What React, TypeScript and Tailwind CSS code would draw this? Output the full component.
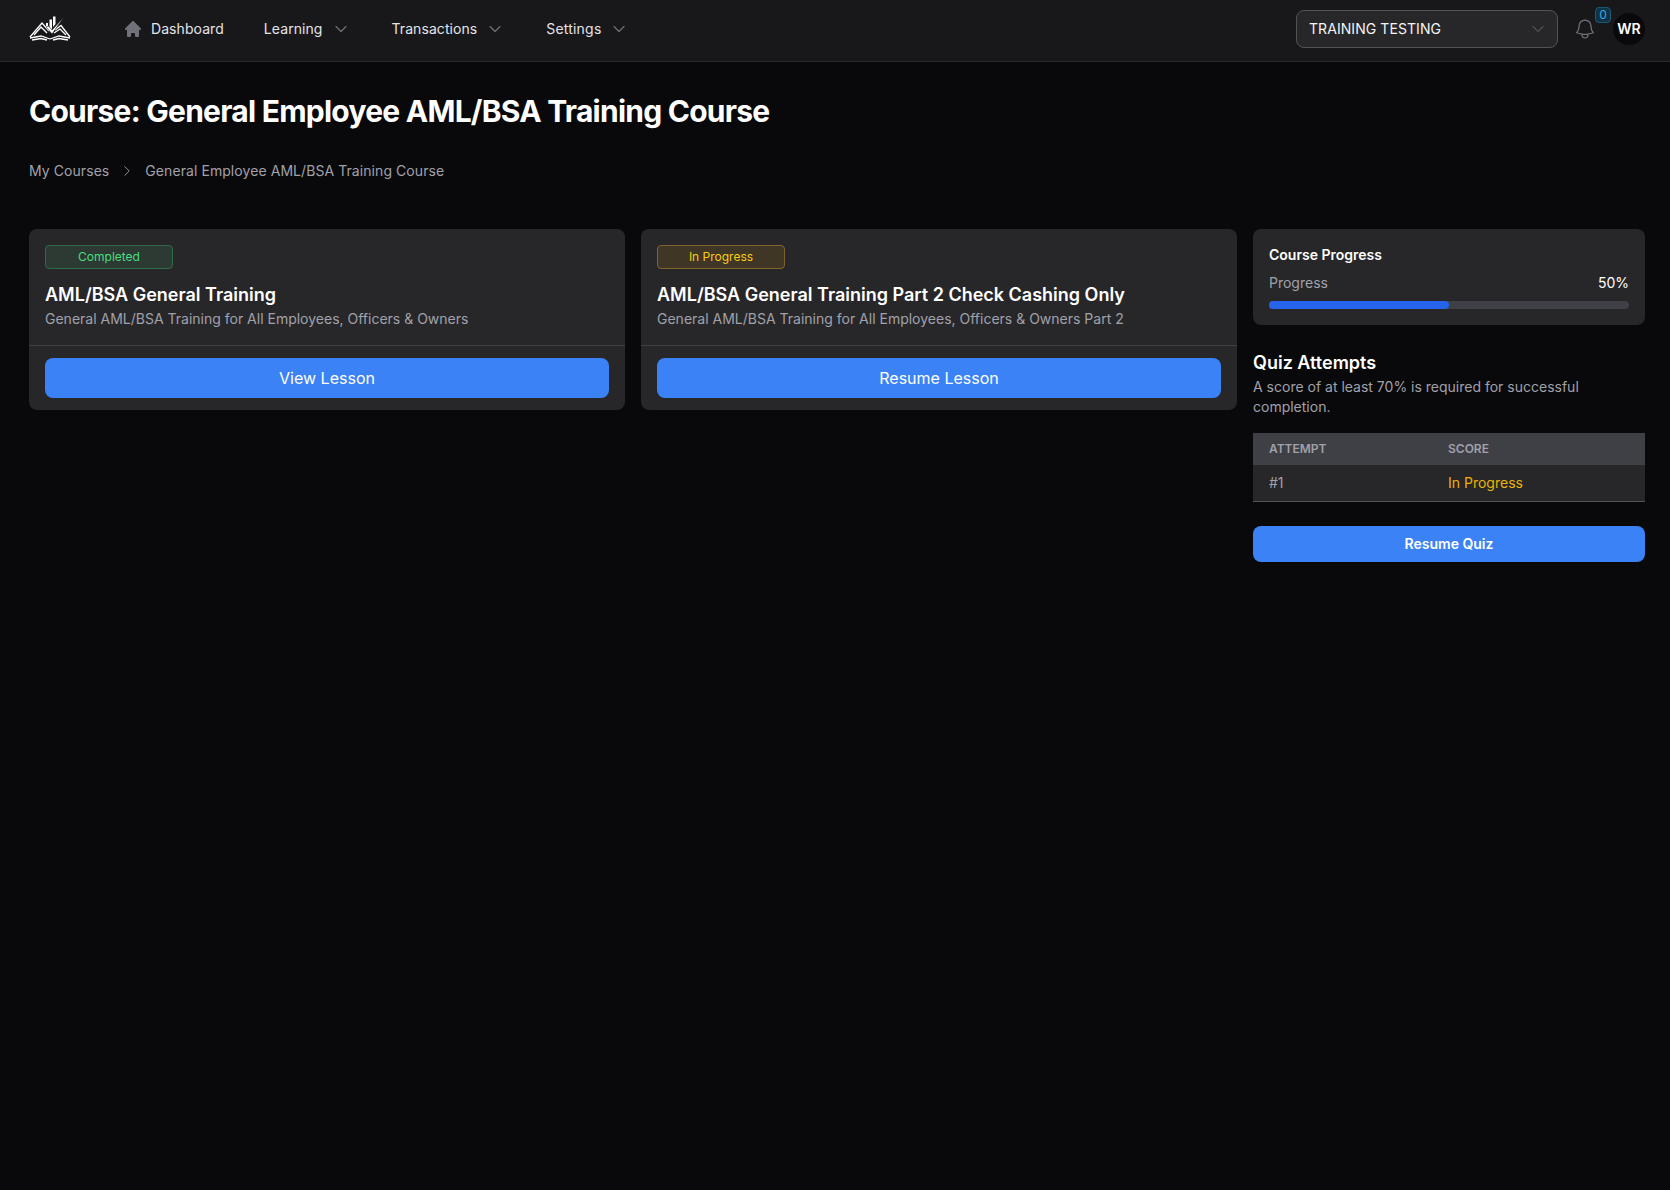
import { HiHome } from "react-icons/hi";
import { HiOutlineBell, HiOutlineChevronDown, HiOutlineChevronRight } from "react-icons/hi2";

function Logo() {
  return (
    <svg width="42" height="26" viewBox="0 0 42 26" fill="none" className="block">
      <g stroke="#fff" strokeWidth="1.3" strokeLinejoin="miter">
        <path d="M1 21 L13 7 L20 15" />
        <path d="M5 19 L12 11 L18 17" />
        <path d="M1 22 L12 20 L21 23" />
        <path d="M3 24 L12 22.5 L18 24" />
        <path d="M41 21 L32 9.5 L26 14" />
        <path d="M37 19 L31 13 L25 17" />
        <path d="M41 22 L30 20 L21 23" />
        <path d="M39 24 L30 22.5 L24 24" />
      </g>
      <path d="M17 7 H19 V13 L17 11 Z M20.5 3.5 H23 V12.5 L22 14.5 L20.5 13 Z M24 0.5 H26.5 V8 L24 11 Z" fill="#fff" />
      <path d="M17 11 L19.5 10 L23 14 L35 1 L23 18 Z" fill="#fff" stroke="#18181b" strokeWidth="0.6" />
    </svg>
  );
}

function NavItem({ label, wide }: { label: string; wide?: boolean }) {
  return (
    <div className="flex items-center">
      <span className={wide ? "text-[14px] leading-5 tracking-[0.2px] text-[#e4e4e7]" : "text-[14px] leading-5 tracking-[0.07px] text-[#e4e4e7]"}>{label}</span>
      <HiOutlineChevronDown className="mr-[3px] ml-2.5 size-4 text-[#71717a]" strokeWidth={1.75} />
    </div>
  );
}

function LessonCard({
  status,
  statusClass,
  title,
  desc,
  action,
}: {
  status: string;
  statusClass: string;
  title: string;
  desc: string;
  action: string;
}) {
  return (
    <div className="flex-1 rounded-lg bg-[#27272a]">
      <div className="border-b border-[#3f3f46] p-4">
        <div className={`flex h-6 w-32 items-center justify-center rounded border text-xs ${statusClass}`}>{status}</div>
        <h2 className="mt-3 text-[18px] leading-7 font-semibold text-white">{title}</h2>
        <p className="text-sm leading-5 text-[#a1a1aa]">{desc}</p>
      </div>
      <div className="px-4 py-3">
        <button className="h-10 w-full rounded-lg bg-[#3b82f6] text-base text-white">{action}</button>
      </div>
    </div>
  );
}

export default function App() {
  return (
    <div className="min-h-[1190px] bg-[#09090b] font-['Inter',sans-serif]">
      <header className="flex h-[62px] items-center border-b border-[#2a2a2e] bg-[#18181b] pr-[25px] pb-[3px] pl-[29px]">
        <Logo />
        <nav className="ml-[52px] flex items-center gap-10">
          <div className="flex items-center">
            <HiHome className="size-[20px] text-[#71717a]" />
            <span className="ml-2 text-[14px] leading-5 tracking-[0.07px] text-[#e4e4e7]">Dashboard</span>
          </div>
          <NavItem label="Learning" />
          <NavItem label="Transactions" />
          <NavItem label="Settings" wide />
        </nav>
        <div className="ml-auto flex items-center">
          <div className="flex h-[38px] w-[262px] items-center justify-between rounded-lg border border-[#52525b] bg-[#27272a] pr-[11px] pl-3">
            <span className="text-sm tracking-[0.07px] text-[#f4f4f5]">TRAINING TESTING</span>
            <HiOutlineChevronDown className="size-4 text-[#71717a]" />
          </div>
          <div className="relative ml-[15px]">
            <HiOutlineBell className="size-6 text-[#71717a]" strokeWidth={1.25} />
            <span className="absolute -top-[10px] left-[22px] flex size-4 items-center justify-center rounded border border-[#1a5a78] bg-[#0f3347] text-xs text-[#38a8e8]">
              0
            </span>
          </div>
          <div className="ml-4 flex size-8 items-center justify-center rounded-full bg-[#09090b] text-sm font-semibold text-white">WR</div>
        </div>
      </header>

      <main className="pr-[25px] pl-[29px]">
        <h1 className="pt-[31px] text-[30px] leading-9 font-bold tracking-tight text-white">Course: General Employee AML/BSA Training Course</h1>
        <div className="mt-8 flex items-center text-sm leading-5 tracking-[0.07px] text-[#a1a1aa]">
          <span>My Courses</span>
          <HiOutlineChevronRight className="mx-[11px] size-3.5 text-[#a1a1aa]" />
          <span>General Employee AML/BSA Training Course</span>
        </div>

        <div className="mt-12 flex items-start gap-4">
          <div className="flex flex-1 items-start gap-4">
            <LessonCard
              status="Completed"
              statusClass="border-[#2f6b46] bg-[#2c3a33] text-[#4ade80]"
              title="AML/BSA General Training"
              desc="General AML/BSA Training for All Employees, Officers & Owners"
              action="View Lesson"
            />
            <LessonCard
              status="In Progress"
              statusClass="border-[#80622a] bg-[#3f3626] text-[#facc15]"
              title="AML/BSA General Training Part 2 Check Cashing Only"
              desc="General AML/BSA Training for All Employees, Officers & Owners Part 2"
              action="Resume Lesson"
            />
          </div>

          <aside className="w-[392px] shrink-0">
            <div className="rounded-lg bg-[#27272a] p-4">
              <h3 className="text-sm leading-5 font-semibold text-white">Course Progress</h3>
              <div className="mt-2 flex justify-between text-sm leading-5">
                <span className="text-[#a1a1aa]">Progress</span>
                <span className="text-white">50%</span>
              </div>
              <div className="mt-2 h-2 rounded-full bg-[#3f3f46]">
                <div className="h-2 w-1/2 rounded-full bg-[#2563eb]" />
              </div>
            </div>

            <h3 className="mt-6 text-lg leading-7 font-semibold text-white">Quiz Attempts</h3>
            <p className="text-sm leading-5 text-[#a1a1aa]">A score of at least 70% is required for successful completion.</p>

            <div className="mt-4">
              <div className="flex h-8 items-center bg-[#3f3f46] px-4 text-xs font-semibold text-[#a1a1aa] uppercase">
                <span className="w-[179px]">Attempt</span>
                <span>Score</span>
              </div>
              <div className="flex h-[37px] items-center border-b border-[#52525b] bg-[#27272a] px-4 text-sm">
                <span className="w-[179px] text-[#a1a1aa]">#1</span>
                <span className="text-[#eab308]">In Progress</span>
              </div>
            </div>

            <button className="mt-6 h-9 w-full rounded-lg bg-[#3b82f6] text-sm font-semibold text-white">Resume Quiz</button>
          </aside>
        </div>
      </main>
    </div>
  );
}
